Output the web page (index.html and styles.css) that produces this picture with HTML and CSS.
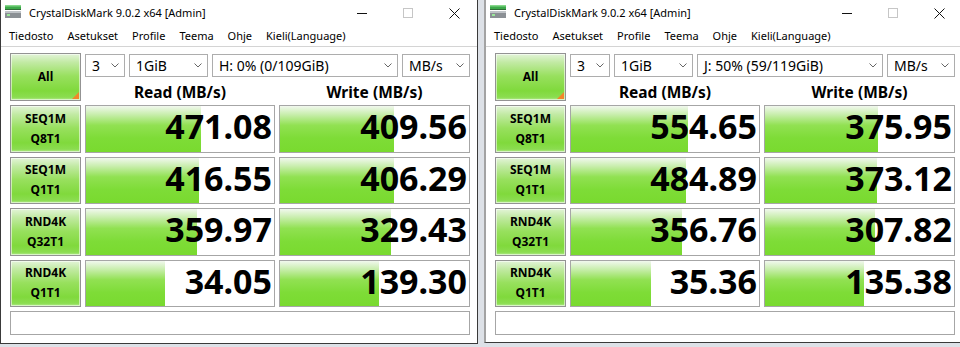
FILE: index.html
```html
<!DOCTYPE html>
<html>
<head>
<meta charset="utf-8">
<link rel="stylesheet" href="styles.css">
</head>
<body>
<div class="desktop">
  <div class="window win-left">
    <div class="titlebar">
      <svg class="app-icon" viewBox="0 0 16 13" width="16" height="13">
        <rect x="0" y="0" width="16" height="4" fill="#3da94a"/>
        <rect x="0" y="0" width="16" height="1.5" fill="#86d88a"/>
        <rect x="0" y="4" width="16" height="1" fill="#2f6b36"/>
        <rect x="0" y="6" width="16" height="7" fill="#8b9095"/>
        <rect x="0" y="6" width="16" height="2" fill="#bfc3c7"/>
        <rect x="2" y="9" width="3" height="2" fill="#9be89b"/>
      </svg>
      <span class="title">CrystalDiskMark 9.0.2 x64 [Admin]</span>
      <div class="caption">
        <span class="cap-btn"><svg width="10" height="1" viewBox="0 0 10 1"><rect width="10" height="1" fill="#111"/></svg></span>
        <span class="cap-btn"><svg width="10" height="10" viewBox="0 0 10 10"><rect x=".5" y=".5" width="9" height="9" fill="none" stroke="#c6c6c6"/></svg></span>
        <span class="cap-btn"><svg width="11" height="11" viewBox="0 0 11 11"><path d="M.5 .5L10.5 10.5M10.5 .5L.5 10.5" stroke="#111" stroke-width="1" fill="none"/></svg></span>
      </div>
    </div>
    <div class="menubar">
      <span>Tiedosto</span><span>Asetukset</span><span>Profile</span><span>Teema</span><span>Ohje</span><span>Kieli(Language)</span>
    </div>
    <div class="content">
      <div class="top">
        <div class="btn all">All</div>
        <div class="top-right">
          <div class="selects">
            <div class="select s-count"><span>3</span><svg class="chev" width="8" height="5" viewBox="0 0 8 5"><polyline points="0.5,0.5 4,4 7.5,0.5" fill="none" stroke="#666" stroke-width="1"/></svg></div>
            <div class="select s-size"><span>1GiB</span><svg class="chev" width="8" height="5" viewBox="0 0 8 5"><polyline points="0.5,0.5 4,4 7.5,0.5" fill="none" stroke="#666" stroke-width="1"/></svg></div>
            <div class="select s-drive"><span>H: 0% (0/109GiB)</span><svg class="chev" width="8" height="5" viewBox="0 0 8 5"><polyline points="0.5,0.5 4,4 7.5,0.5" fill="none" stroke="#666" stroke-width="1"/></svg></div>
            <div class="select s-unit"><span>MB/s</span><svg class="chev" width="8" height="5" viewBox="0 0 8 5"><polyline points="0.5,0.5 4,4 7.5,0.5" fill="none" stroke="#666" stroke-width="1"/></svg></div>
          </div>
          <div class="headers"><div>Read (MB/s)</div><div>Write (MB/s)</div></div>
        </div>
      </div>
      <div class="row">
        <div class="btn">SEQ1M<br>Q8T1</div>
        <div class="meter"><div class="fill" style="width:61.2%"></div><span class="val">471.08</span></div>
        <div class="meter"><div class="fill" style="width:60.2%"></div><span class="val">409.56</span></div>
      </div>
      <div class="row">
        <div class="btn">SEQ1M<br>Q1T1</div>
        <div class="meter"><div class="fill" style="width:60.3%"></div><span class="val">416.55</span></div>
        <div class="meter"><div class="fill" style="width:60.1%"></div><span class="val">406.29</span></div>
      </div>
      <div class="row">
        <div class="btn">RND4K<br>Q32T1</div>
        <div class="meter"><div class="fill" style="width:59.3%"></div><span class="val">359.97</span></div>
        <div class="meter"><div class="fill" style="width:58.6%"></div><span class="val">329.43</span></div>
      </div>
      <div class="row">
        <div class="btn">RND4K<br>Q1T1</div>
        <div class="meter"><div class="fill" style="width:42.2%"></div><span class="val">34.05</span></div>
        <div class="meter"><div class="fill" style="width:52.4%"></div><span class="val">139.30</span></div>
      </div>
      <div class="comment"></div>
    </div>
  </div>

  <div class="window win-right">
    <div class="titlebar">
      <svg class="app-icon" viewBox="0 0 16 13" width="16" height="13">
        <rect x="0" y="0" width="16" height="4" fill="#3da94a"/>
        <rect x="0" y="0" width="16" height="1.5" fill="#86d88a"/>
        <rect x="0" y="4" width="16" height="1" fill="#2f6b36"/>
        <rect x="0" y="6" width="16" height="7" fill="#8b9095"/>
        <rect x="0" y="6" width="16" height="2" fill="#bfc3c7"/>
        <rect x="2" y="9" width="3" height="2" fill="#9be89b"/>
      </svg>
      <span class="title">CrystalDiskMark 9.0.2 x64 [Admin]</span>
      <div class="caption">
        <span class="cap-btn"><svg width="10" height="1" viewBox="0 0 10 1"><rect width="10" height="1" fill="#111"/></svg></span>
        <span class="cap-btn"><svg width="10" height="10" viewBox="0 0 10 10"><rect x=".5" y=".5" width="9" height="9" fill="none" stroke="#c6c6c6"/></svg></span>
        <span class="cap-btn"><svg width="11" height="11" viewBox="0 0 11 11"><path d="M.5 .5L10.5 10.5M10.5 .5L.5 10.5" stroke="#111" stroke-width="1" fill="none"/></svg></span>
      </div>
    </div>
    <div class="menubar">
      <span>Tiedosto</span><span>Asetukset</span><span>Profile</span><span>Teema</span><span>Ohje</span><span>Kieli(Language)</span>
    </div>
    <div class="content">
      <div class="top">
        <div class="btn all">All</div>
        <div class="top-right">
          <div class="selects">
            <div class="select s-count"><span>3</span><svg class="chev" width="8" height="5" viewBox="0 0 8 5"><polyline points="0.5,0.5 4,4 7.5,0.5" fill="none" stroke="#666" stroke-width="1"/></svg></div>
            <div class="select s-size"><span>1GiB</span><svg class="chev" width="8" height="5" viewBox="0 0 8 5"><polyline points="0.5,0.5 4,4 7.5,0.5" fill="none" stroke="#666" stroke-width="1"/></svg></div>
            <div class="select s-drive"><span>J: 50% (59/119GiB)</span><svg class="chev" width="8" height="5" viewBox="0 0 8 5"><polyline points="0.5,0.5 4,4 7.5,0.5" fill="none" stroke="#666" stroke-width="1"/></svg></div>
            <div class="select s-unit"><span>MB/s</span><svg class="chev" width="8" height="5" viewBox="0 0 8 5"><polyline points="0.5,0.5 4,4 7.5,0.5" fill="none" stroke="#666" stroke-width="1"/></svg></div>
          </div>
          <div class="headers"><div>Read (MB/s)</div><div>Write (MB/s)</div></div>
        </div>
      </div>
      <div class="row">
        <div class="btn">SEQ1M<br>Q8T1</div>
        <div class="meter"><div class="fill" style="width:62.4%"></div><span class="val">554.65</span></div>
        <div class="meter"><div class="fill" style="width:59.6%"></div><span class="val">375.95</span></div>
      </div>
      <div class="row">
        <div class="btn">SEQ1M<br>Q1T1</div>
        <div class="meter"><div class="fill" style="width:61.4%"></div><span class="val">484.89</span></div>
        <div class="meter"><div class="fill" style="width:59.5%"></div><span class="val">373.12</span></div>
      </div>
      <div class="row">
        <div class="btn">RND4K<br>Q32T1</div>
        <div class="meter"><div class="fill" style="width:59.2%"></div><span class="val">356.76</span></div>
        <div class="meter"><div class="fill" style="width:58.1%"></div><span class="val">307.82</span></div>
      </div>
      <div class="row">
        <div class="btn">RND4K<br>Q1T1</div>
        <div class="meter"><div class="fill" style="width:42.5%"></div><span class="val">35.36</span></div>
        <div class="meter"><div class="fill" style="width:52.2%"></div><span class="val">135.38</span></div>
      </div>
      <div class="comment"></div>
    </div>
  </div>
</div>
</body>
</html>
```

FILE: styles.css
```css
* { box-sizing: border-box; }
html, body { margin: 0; padding: 0; }
body {
  width: 960px;
  height: 347px;
  overflow: hidden;
  background: #dde1e7;
  font-family: "Noto Sans", "DejaVu Sans", sans-serif;
  color: #000;
}
.desktop {
  display: flex;
  gap: 6px;
  width: 960px;
  height: 347px;
}
.window {
  flex: none;
  background: #fff;
  display: flex;
  flex-direction: column;
  height: 344px;
  border: 1px solid #3a3a3a;
  border-top: 0;
}
.win-left { width: 478px; }
.win-right {
  width: 478px;
  height: 343px;
  border-left: 2px solid #a3a3a3;
  border-right: 0;
}

/* title bar */
.titlebar {
  flex: none;
  height: 24px;
  display: flex;
  align-items: center;
}
.app-icon { flex: none; margin-left: 4px; margin-top: -1px; }
.title { margin-left: 8px; font-size: 11px; white-space: nowrap; }
.caption { margin-left: auto; display: flex; height: 24px; }
.cap-btn {
  width: 46px;
  display: flex;
  align-items: center;
  justify-content: center;
  margin-top: 2px;
}

/* menu */
.menubar {
  flex: none;
  height: 23px;
  display: flex;
  align-items: center;
  gap: 14px;
  padding-left: 8px;
  font-size: 11px;
  border-bottom: 1px solid #d4d4d4;
}

/* content */
.content {
  padding: 6px 0 0 9px;
  display: flex;
  flex-direction: column;
  gap: 4px;
}
.top {
  display: grid;
  grid-template-columns: 71px 385px;
  column-gap: 4px;
  height: 48px;
}
.btn {
  border: 1px solid #939393;
  box-shadow: inset 0 0 0 1px rgba(255, 255, 255, 0.55);
  background: linear-gradient(180deg, #e3f4d8 0%, #c2eaa4 18%, #98e05e 48%, #80d93c 80%, #8bdd50 94%, #b3e98e 100%);
  display: flex;
  flex-direction: column;
  align-items: center;
  justify-content: center;
  text-align: center;
  font-weight: 700;
  font-size: 12px;
  line-height: 20px;
}
.all { position: relative; }
.all::after {
  content: "";
  position: absolute;
  right: 1px;
  bottom: 1px;
  width: 0;
  height: 0;
  border-left: 7px solid transparent;
  border-bottom: 7px solid #f2862a;
}
.top-right { display: flex; flex-direction: column; }
.selects {
  display: flex;
  gap: 4px;
  height: 24px;
  padding-top: 1px;
}
.select {
  height: 23px;
  border: 1px solid #adadad;
  display: flex;
  align-items: center;
  justify-content: space-between;
  padding: 0 5px 0 6px;
  font-size: 14px;
  white-space: nowrap;
}
.chev { flex: none; }
.s-count { width: 40px; }
.s-size { width: 79px; }
.s-drive { width: 186px; }
.s-unit { width: 68px; }
.headers {
  display: grid;
  grid-template-columns: 190px 191px;
  column-gap: 4px;
  height: 24px;
}
.headers div {
  align-self: end;
  text-align: center;
  font-weight: 700;
  font-size: 15.5px;
  line-height: 18px;
}

.row {
  display: grid;
  grid-template-columns: 71px 190px 191px;
  column-gap: 4px;
  height: 47.5px;
}
.meter {
  border: 1px solid #a6a6a6;
  background: #fff;
  display: grid;
  grid-template-columns: 100%;
  grid-template-rows: 100%;
}
.fill, .val { grid-area: 1 / 1; }
.fill {
  justify-self: start;
  height: 100%;
  background: linear-gradient(180deg, #f1f8ee 0%, #c9eeae 18%, #91e152 42%, #7edc37 70%, #79da2f 100%);
}
.val {
  justify-self: end;
  align-self: start;
  font-weight: 700;
  font-size: 34px;
  line-height: 41px;
  padding-right: 2px;
  white-space: nowrap;
}
.comment {
  height: 24px;
  width: 460px;
  border: 1px solid #a6a6a6;
}
```
